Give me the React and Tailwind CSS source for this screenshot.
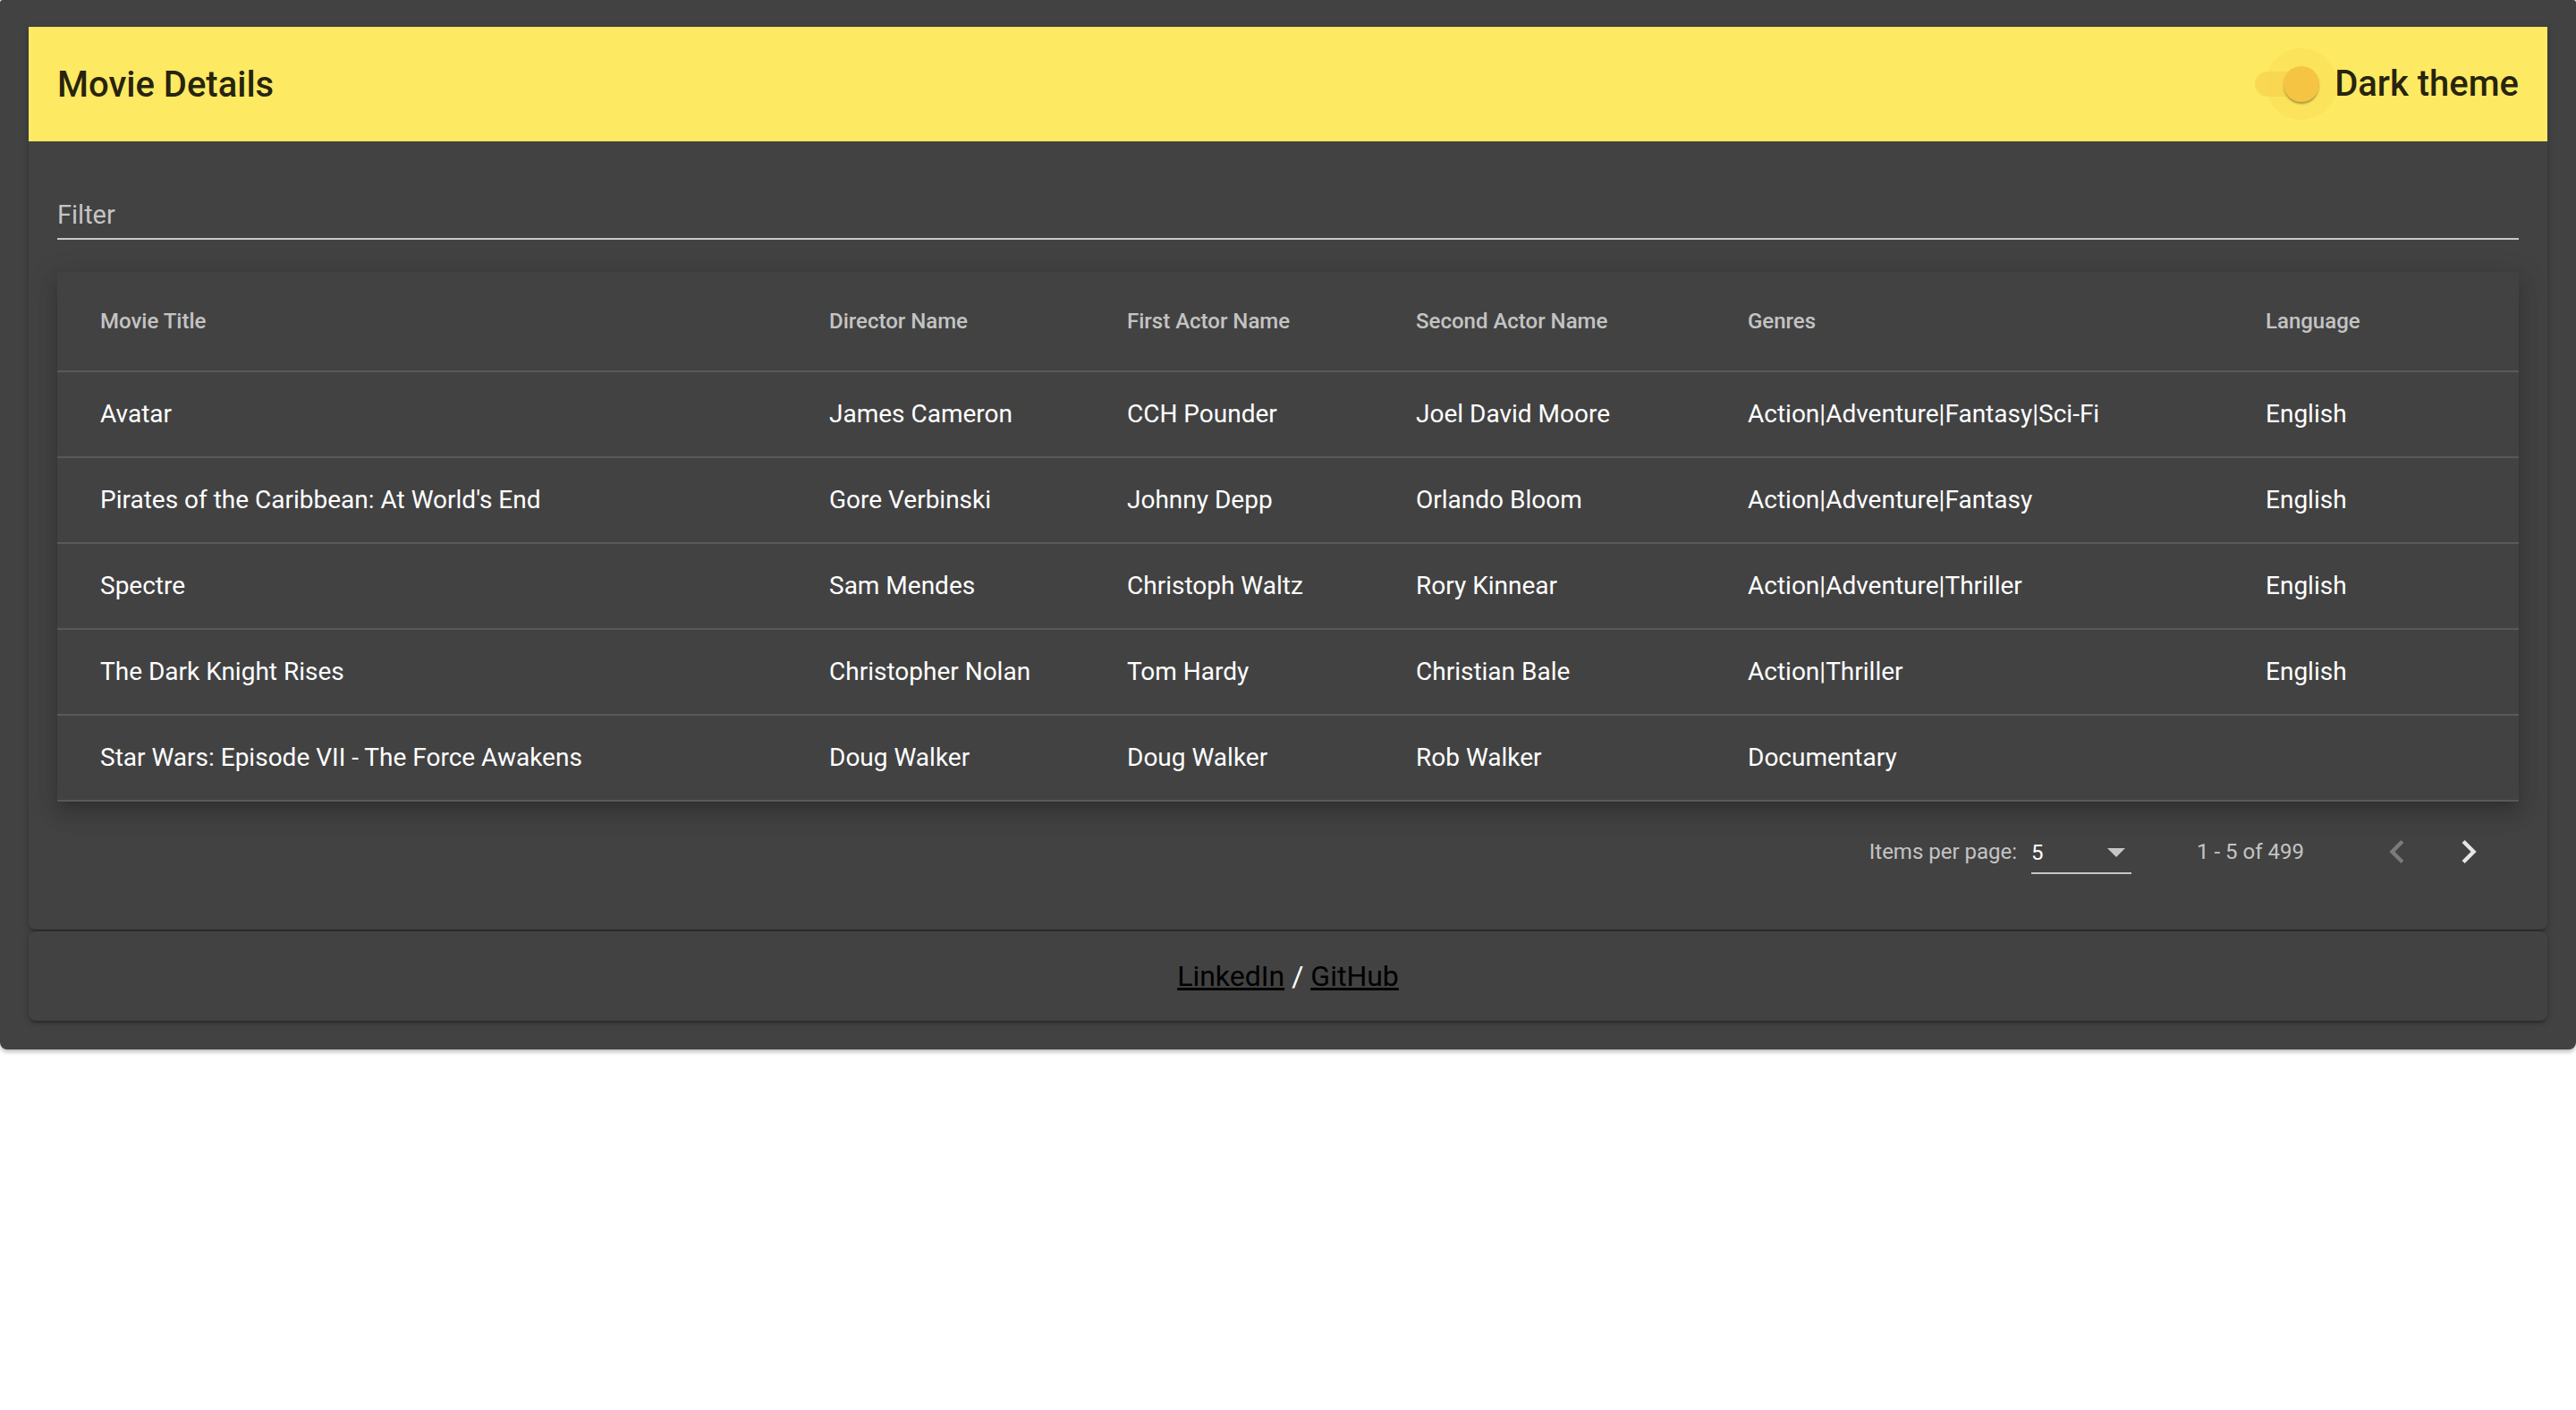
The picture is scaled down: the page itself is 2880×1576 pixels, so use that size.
import React from 'react';

const movies = [
  { title: 'Avatar', director: 'James Cameron', actor1: 'CCH Pounder', actor2: 'Joel David Moore', genres: 'Action|Adventure|Fantasy|Sci-Fi', language: 'English' },
  { title: "Pirates of the Caribbean: At World's End", director: 'Gore Verbinski', actor1: 'Johnny Depp', actor2: 'Orlando Bloom', genres: 'Action|Adventure|Fantasy', language: 'English' },
  { title: 'Spectre', director: 'Sam Mendes', actor1: 'Christoph Waltz', actor2: 'Rory Kinnear', genres: 'Action|Adventure|Thriller', language: 'English' },
  { title: 'The Dark Knight Rises', director: 'Christopher Nolan', actor1: 'Tom Hardy', actor2: 'Christian Bale', genres: 'Action|Thriller', language: 'English' },
  { title: 'Star Wars: Episode VII - The Force Awakens', director: 'Doug Walker', actor1: 'Doug Walker', actor2: 'Rob Walker', genres: 'Documentary', language: '' },
];

const columns = ['Movie Title', 'Director Name', 'First Actor Name', 'Second Actor Name', 'Genres', 'Language'];

const gridCols = 'grid grid-cols-[815px_333px_323px_371px_579px_1fr] px-12 items-center';

const ThemeToggle = () => (
  <div className="flex items-center">
    <div className="relative w-[72px] h-[28px]">
      {/* halo */}
      <div className="absolute left-[12px] top-[-26px] w-[80px] h-[80px] rounded-full bg-[#fce35c]" />
      {/* track */}
      <div className="absolute inset-0 rounded-full bg-[#f6cf4a] opacity-60" />
      {/* thumb */}
      <div className="absolute left-[32px] top-[-6px] w-[40px] h-[40px] rounded-full bg-[#f5c443] shadow-[0_3px_2px_-1px_rgba(0,0,0,0.25),0_2px_3px_0_rgba(0,0,0,0.12)]" />
    </div>
    <span className="ml-[17px] text-[40px] font-medium text-[rgba(0,0,0,0.87)] leading-none">Dark theme</span>
  </div>
);

const ChevronLeft = ({ className }) => (
  <svg viewBox="0 0 24 24" className={className} fill="currentColor">
    <path d="M15.41 7.41L14 6l-6 6 6 6 1.41-1.41L10.83 12z" />
  </svg>
);

const ChevronRight = ({ className }) => (
  <svg viewBox="0 0 24 24" className={className} fill="currentColor">
    <path d="M10 6L8.59 7.41 13.17 12l-4.58 4.59L10 18l6-6z" />
  </svg>
);

const Paginator = () => (
  <div className="h-[112px] flex items-center justify-end pr-4 text-[24px] text-[rgba(255,255,255,0.7)]">
    <span>Items per page:</span>
    <div className="ml-4 w-[112px] h-[46px] flex items-center justify-between border-b-2 border-[#c6c6c6] mt-[4px]">
      <span className="text-white">5</span>
      <svg viewBox="0 0 20 10" className="w-[20px] h-[10px] mr-[7px] text-[#c6c6c6]" fill="currentColor">
        <path d="M0 0L10 10L20 0z" />
      </svg>
    </div>
    <span className="ml-[73px] mr-[64px]">1 - 5 of 499</span>
    <button className="w-[80px] h-[80px] flex items-center justify-center text-[rgba(255,255,255,0.3)]">
      <ChevronLeft className="w-[52px] h-[52px]" />
    </button>
    <button className="w-[80px] h-[80px] flex items-center justify-center text-[#e6e6e6]">
      <ChevronRight className="w-[52px] h-[52px]" />
    </button>
  </div>
);

const App = () => {
  return (
    <div className="w-[2880px] min-h-[1576px] bg-white" style={{ fontFamily: 'Roboto, "Noto Sans", sans-serif' }}>
      <div className="bg-[#424242] rounded-b-lg rounded-t-[3px] px-8 pt-[30px] pb-8 shadow-[0_3px_4px_0_rgba(0,0,0,0.25)]">
        {/* Main card */}
        <div className="bg-[#424242] rounded-b-lg shadow-[0_4px_2px_-2px_rgba(0,0,0,0.2),0_2px_4px_0_rgba(0,0,0,0.14),0_2px_8px_0_rgba(0,0,0,0.12)]">
          {/* Toolbar */}
          <header className="h-32 bg-[#fde962] flex items-center justify-between px-8">
            <h1 className="text-[40px] font-medium text-[rgba(0,0,0,0.87)] leading-none mt-[2px]">Movie Details</h1>
            <ThemeToggle />
          </header>

          <div className="px-8 pb-[31px]">
            {/* Filter */}
            <div className="pt-[65px] pb-[9px] border-b-2 border-[#c8c8c8]">
              <div className="h-[34px] text-[29px] leading-[34px] text-[#c4c4c4]">Filter</div>
            </div>

            {/* Table */}
            <div className="mt-[36px] bg-[#424242] shadow-[0_8px_10px_-6px_rgba(0,0,0,0.18),0_14px_20px_2px_rgba(0,0,0,0.1),0_6px_28px_5px_rgba(0,0,0,0.1)]">
              <div className={`${gridCols} h-[112px] border-b-2 border-[#595959] text-[24px] font-medium text-[rgba(255,255,255,0.7)]`}>
                {columns.map((c) => (
                  <div key={c}>{c}</div>
                ))}
              </div>
              {movies.map((m) => (
                <div key={m.title} className={`${gridCols} h-[96px] border-b-2 border-[#595959] text-[28px] text-white`}>
                  <div>{m.title}</div>
                  <div>{m.director}</div>
                  <div>{m.actor1}</div>
                  <div>{m.actor2}</div>
                  <div>{m.genres}</div>
                  <div>{m.language}</div>
                </div>
              ))}
            </div>

            <Paginator />
          </div>
        </div>

        {/* Footer card */}
        <div className="mt-[2px] h-[100px] rounded-lg bg-[#424242] flex items-center justify-center text-[32px] text-white shadow-[0_4px_2px_-2px_rgba(0,0,0,0.2),0_2px_4px_0_rgba(0,0,0,0.14),0_2px_8px_0_rgba(0,0,0,0.12)]">
          <a href="#" className="text-black underline">LinkedIn</a>
          <span className="mx-[8px]">/</span>
          <a href="#" className="text-black underline">GitHub</a>
        </div>
      </div>
    </div>
  );
};

export default App;
